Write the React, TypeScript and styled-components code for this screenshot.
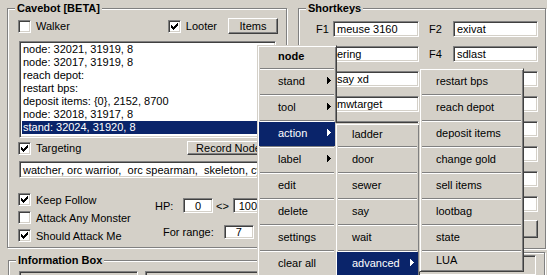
import React from "react";
import styled, { createGlobalStyle, css } from "styled-components";

const GlobalStyle = createGlobalStyle`
  html, body { margin: 0; padding: 0; background: #d4d0c8; }
  body {
    font-family: "Liberation Sans", Arial, sans-serif;
    font-size: 11px;
    color: #000;
  }
`;

const sunken = css`
  border: 1px solid;
  border-color: #808080 #fff #fff #808080;
  box-shadow: inset 1px 1px #404040, inset -1px -1px #d4d0c8;
`;

const raised = css`
  border: 1px solid;
  border-color: #fff #404040 #404040 #fff;
  box-shadow: inset -1px -1px #808080;
`;

const Window = styled.div`
  position: relative;
  width: 547px;
  height: 275px;
  overflow: hidden;
  box-sizing: border-box;
  padding-left: 7px;
  display: flex;
  flex-direction: column;
`;

const Row = styled.div<{ $mt?: number }>`
  display: flex;
  margin-top: ${(p) => p.$mt ?? 0}px;
`;

const Group = styled.fieldset<{ $w: number; $h: number; $ml?: number }>`
  box-sizing: border-box;
  width: ${(p) => p.$w}px;
  height: ${(p) => p.$h}px;
  margin: 0 0 0 ${(p) => p.$ml ?? 0}px;
  padding: 0;
  min-width: 0;
  flex-shrink: 0;
  border: 1px solid #808080;
  box-shadow: inset 1px 1px #fff, 1px 1px #fff;
`;

const Title = styled.legend`
  font-weight: bold;
  line-height: 17px;
  padding: 0 2px;
  margin-left: 7px;
  background: #d4d0c8;
`;

const CaveBody = styled.div`
  padding: 1px 8px 0 10px;
  display: flex;
  flex-direction: column;
`;

const Line = styled.div<{ $h: number; $mt?: number }>`
  display: flex;
  align-items: center;
  justify-content: space-between;
  height: ${(p) => p.$h}px;
  margin-top: ${(p) => p.$mt ?? 0}px;
`;

const Check = styled.label`
  display: flex;
  align-items: center;
  gap: 5px;
  height: 13px;
  white-space: nowrap;
`;

const Box = styled.span`
  box-sizing: border-box;
  width: 13px;
  height: 13px;
  background: #fff;
  display: flex;
  align-items: center;
  justify-content: center;
  ${sunken}
`;

const Button = styled.div<{ $w: number; $h: number; $mr?: number }>`
  box-sizing: border-box;
  width: ${(p) => p.$w}px;
  height: ${(p) => p.$h}px;
  margin-right: ${(p) => p.$mr ?? 0}px;
  display: flex;
  align-items: center;
  justify-content: center;
  background: #d4d0c8;
  white-space: nowrap;
  overflow: hidden;
  ${raised}
`;

const Cluster = styled.div<{ $gap: number }>`
  display: flex;
  align-items: center;
  gap: ${(p) => p.$gap}px;
`;

const List = styled.div`
  box-sizing: border-box;
  width: 257px;
  height: 97px;
  margin: 7px 0 0 1px;
  padding: 1px 2px 0 2px;
  background: #fff;
  overflow: hidden;
  ${sunken}
`;

const ListRow = styled.div<{ $sel?: boolean }>`
  line-height: 13px;
  padding-left: 1px;
  white-space: nowrap;
  background: ${(p) => (p.$sel ? "#0a246a" : "transparent")};
  color: ${(p) => (p.$sel ? "#fff" : "#000")};
`;

const Field = styled.div<{ $w: number; $h: number; $ml?: number; $center?: boolean; $gray?: boolean }>`
  box-sizing: border-box;
  width: ${(p) => p.$w}px;
  height: ${(p) => p.$h}px;
  margin-left: ${(p) => p.$ml ?? 0}px;
  padding: 0 3px;
  display: flex;
  align-items: center;
  justify-content: ${(p) => (p.$center ? "center" : "flex-start")};
  background: ${(p) => (p.$gray ? "#d4d0c8" : "#fff")};
  white-space: pre;
  overflow: hidden;
  flex-shrink: 0;
  ${sunken}
`;

const TargetField = styled(Field)`
  margin-top: 6px;
`;

const Lower = styled.div`
  display: flex;
  margin-top: 15px;
`;

const CheckColumn = styled.div`
  width: 137px;
  display: flex;
  flex-direction: column;
  gap: 5px;
`;

const RangeColumn = styled.div`
  display: flex;
  flex-direction: column;
  padding-top: 5px;
  gap: 12px;
`;

const RangeRow = styled.div<{ $ml?: number; $gap: number }>`
  display: flex;
  align-items: center;
  gap: ${(p) => p.$gap}px;
  margin-left: ${(p) => p.$ml ?? 0}px;
`;

const HpLabel = styled.span`
  width: 28px;
`;

const Between = styled.span`
  margin: 0 4px 0 3px;
`;

const KeysBody = styled.div`
  padding: 4px 0 0 17px;
`;

const KeyGrid = styled.div`
  display: grid;
  grid-template-columns: 17px 86px 10px 24px 85px;
  grid-auto-rows: 16px;
  row-gap: 9px;
  align-items: center;
`;

const KeyButton = styled(Button)`
  grid-column: 1 / 6;
  width: auto;
`;

const InfoBody = styled.div`
  display: flex;
  gap: 7px;
  padding: 2px 0 0 10px;
`;

const Menu = styled.div<{ $left: number; $top: number; $w: number }>`
  position: absolute;
  left: ${(p) => p.$left}px;
  top: ${(p) => p.$top}px;
  width: ${(p) => p.$w}px;
  box-sizing: border-box;
  padding: 1px;
  background: #d4d0c8;
  border: 1px solid;
  border-color: #d4d0c8 #404040 #404040 #d4d0c8;
  box-shadow: inset 1px 1px #fff, inset -1px -1px #808080;
  display: flex;
  flex-direction: column;
`;

const Item = styled.div<{ $h: number; $active?: boolean; $bold?: boolean; $pl: number }>`
  height: ${(p) => p.$h}px;
  flex-shrink: 0;
  box-sizing: border-box;
  padding: 0 4px 3px ${(p) => p.$pl}px;
  display: flex;
  align-items: center;
  justify-content: space-between;
  white-space: nowrap;
  font-weight: ${(p) => (p.$bold ? "bold" : "normal")};
  background: ${(p) => (p.$active ? "#0a246a" : "transparent")};
  color: ${(p) => (p.$active ? "#fff" : "#000")};
`;

const Sep = styled.div`
  height: 1px;
  margin: 0 1px;
  border-top: 1px solid #808080;
  background: #fff;
`;

const CheckMark = () => (
  <svg width="7" height="7" viewBox="0 0 7 7">
    <path
      fill="#000"
      d="M6 0h1v1h-1z M5 1h2v1h-2z M0 2h1v1h-1z M4 2h3v1h-3z M0 3h2v1h-2z M3 3h3v1h-3z M0 4h5v1h-5z M1 5h3v1h-3z M2 6h1v1h-1z"
    />
  </svg>
);

const Arrow = ({ color }: { color: string }) => (
  <svg width="4" height="7" viewBox="0 0 4 7">
    <path fill={color} d="M0 0h1v7h-1z M1 1h1v5h-1z M2 2h1v3h-1z M3 3h1v1h-1z" />
  </svg>
);

const CheckBox = ({ label, checked }: { label: string; checked?: boolean }) => (
  <Check>
    <Box>{checked && <CheckMark />}</Box>
    {label}
  </Check>
);

type Entry = { text: string; sub?: boolean; active?: boolean; bold?: boolean };

const MenuList = ({
  left,
  top,
  w,
  pl,
  first,
  last = 24,
  items,
}: {
  left: number;
  top: number;
  w: number;
  pl: number;
  first: number;
  last?: number;
  items: Entry[];
}) => (
  <Menu $left={left} $top={top} $w={w}>
    {items.map((it, i) => (
      <React.Fragment key={it.text}>
        {i > 0 && <Sep />}
        <Item
          $h={i === 0 ? first : i === items.length - 1 ? last : 24}
          $active={it.active}
          $bold={it.bold}
          $pl={pl}
        >
          <span>{it.text}</span>
          {it.sub && <Arrow color={it.active ? "#fff" : "#000"} />}
        </Item>
      </React.Fragment>
    ))}
  </Menu>
);

const waypoints = [
  "node: 32021, 31919, 8",
  "node: 32017, 31919, 8",
  "reach depot:",
  "restart bps:",
  "deposit items: {0}, 2152, 8700",
  "node: 32018, 31917, 8",
  "stand: 32024, 31920, 8",
];

// hotkeys hidden under the open menu keep an empty label
const keys: [string, string, string, string][] = [
  ["F1", "meuse 3160", "F2", "exivat"],
  ["", "ering", "F4", "sdlast"],
  ["", "say xd", "", ""],
  ["", "mwtarget", "", ""],
  ["", "", "", ""],
  ["", "", "", ""],
  ["", "", "", ""],
  ["", "", "", ""],
];

export default function App() {
  return (
    <>
      <GlobalStyle />
      <Window>
        <Row>
          <Group $w={280} $h={248}>
            <Title>Cavebot [BETA]</Title>
            <CaveBody>
              <Line $h={16}>
                <CheckBox label="Walker" />
                <Cluster $gap={11}>
                  <CheckBox label="Looter" checked />
                  <Button $w={50} $h={16}>Items</Button>
                </Cluster>
              </Line>
              <List>
                {waypoints.map((w, i) => (
                  <ListRow key={w} $sel={i === waypoints.length - 1}>
                    {w}
                  </ListRow>
                ))}
              </List>
              <Line $h={14} $mt={3}>
                <CheckBox label="Targeting" checked />
                <Button $w={83} $h={14} $mr={8}>Record Node</Button>
              </Line>
              <TargetField $w={259} $h={17} $ml={1}>
                {"watcher, orc warrior,  orc spearman,  skeleton, cyclops"}
              </TargetField>
              <Lower>
                <CheckColumn>
                  <CheckBox label="Keep Follow" checked />
                  <CheckBox label="Attack Any Monster" />
                  <CheckBox label="Should Attack Me" checked />
                </CheckColumn>
                <RangeColumn>
                  <RangeRow $gap={0}>
                    <HpLabel>HP:</HpLabel>
                    <Field $w={30} $h={15} $center>0</Field>
                    <Between>&lt;&gt;</Between>
                    <Field $w={30} $h={15} $center>100</Field>
                  </RangeRow>
                  <RangeRow $ml={8} $gap={10}>
                    <span>For range:</span>
                    <Field $w={30} $h={14} $center>7</Field>
                  </RangeRow>
                </RangeColumn>
              </Lower>
            </CaveBody>
          </Group>
          <Group $w={248} $h={249} $ml={11}>
            <Title>Shortkeys</Title>
            <KeysBody>
              <KeyGrid>
                {keys.map(([l1, v1, l2, v2], i) => (
                  <React.Fragment key={i}>
                    <span>{l1}</span>
                    <Field $w={86} $h={16}>{v1}</Field>
                    <span />
                    <span>{l2}</span>
                    <Field $w={85} $h={16}>{v2}</Field>
                  </React.Fragment>
                ))}
                <KeyButton $w={0} $h={18} />
              </KeyGrid>
            </KeysBody>
          </Group>
        </Row>
        <Row $mt={3}>
          <Group $w={279} $h={60} $ml={1}>
            <Title>Information Box</Title>
            <InfoBody>
              <Field $w={119} $h={20} $gray />
              <Field $w={120} $h={20} $gray />
            </InfoBody>
          </Group>
          <Group $w={248} $h={60} $ml={10}>
            <InfoBody>
              <Field $w={228} $h={20} $gray />
            </InfoBody>
          </Group>
        </Row>

        <MenuList
          left={257}
          top={45}
          w={80}
          pl={19}
          first={21}
          items={[
            { text: "node", bold: true },
            { text: "stand", sub: true },
            { text: "tool", sub: true },
            { text: "action", sub: true, active: true },
            { text: "label", sub: true },
            { text: "edit" },
            { text: "delete" },
            { text: "settings" },
            { text: "clear all" },
          ]}
        />
        <MenuList
          left={335}
          top={123}
          w={85}
          pl={15}
          first={21}
          items={[
            { text: "ladder" },
            { text: "door" },
            { text: "sewer" },
            { text: "say" },
            { text: "wait" },
            { text: "advanced", sub: true, active: true },
          ]}
        />
        <MenuList
          left={419}
          top={68}
          w={105}
          pl={15}
          first={24}
          last={18}
          items={[
            { text: "restart bps" },
            { text: "reach depot" },
            { text: "deposit items" },
            { text: "change gold" },
            { text: "sell items" },
            { text: "lootbag" },
            { text: "state" },
            { text: "LUA" },
          ]}
        />
      </Window>
    </>
  );
}
